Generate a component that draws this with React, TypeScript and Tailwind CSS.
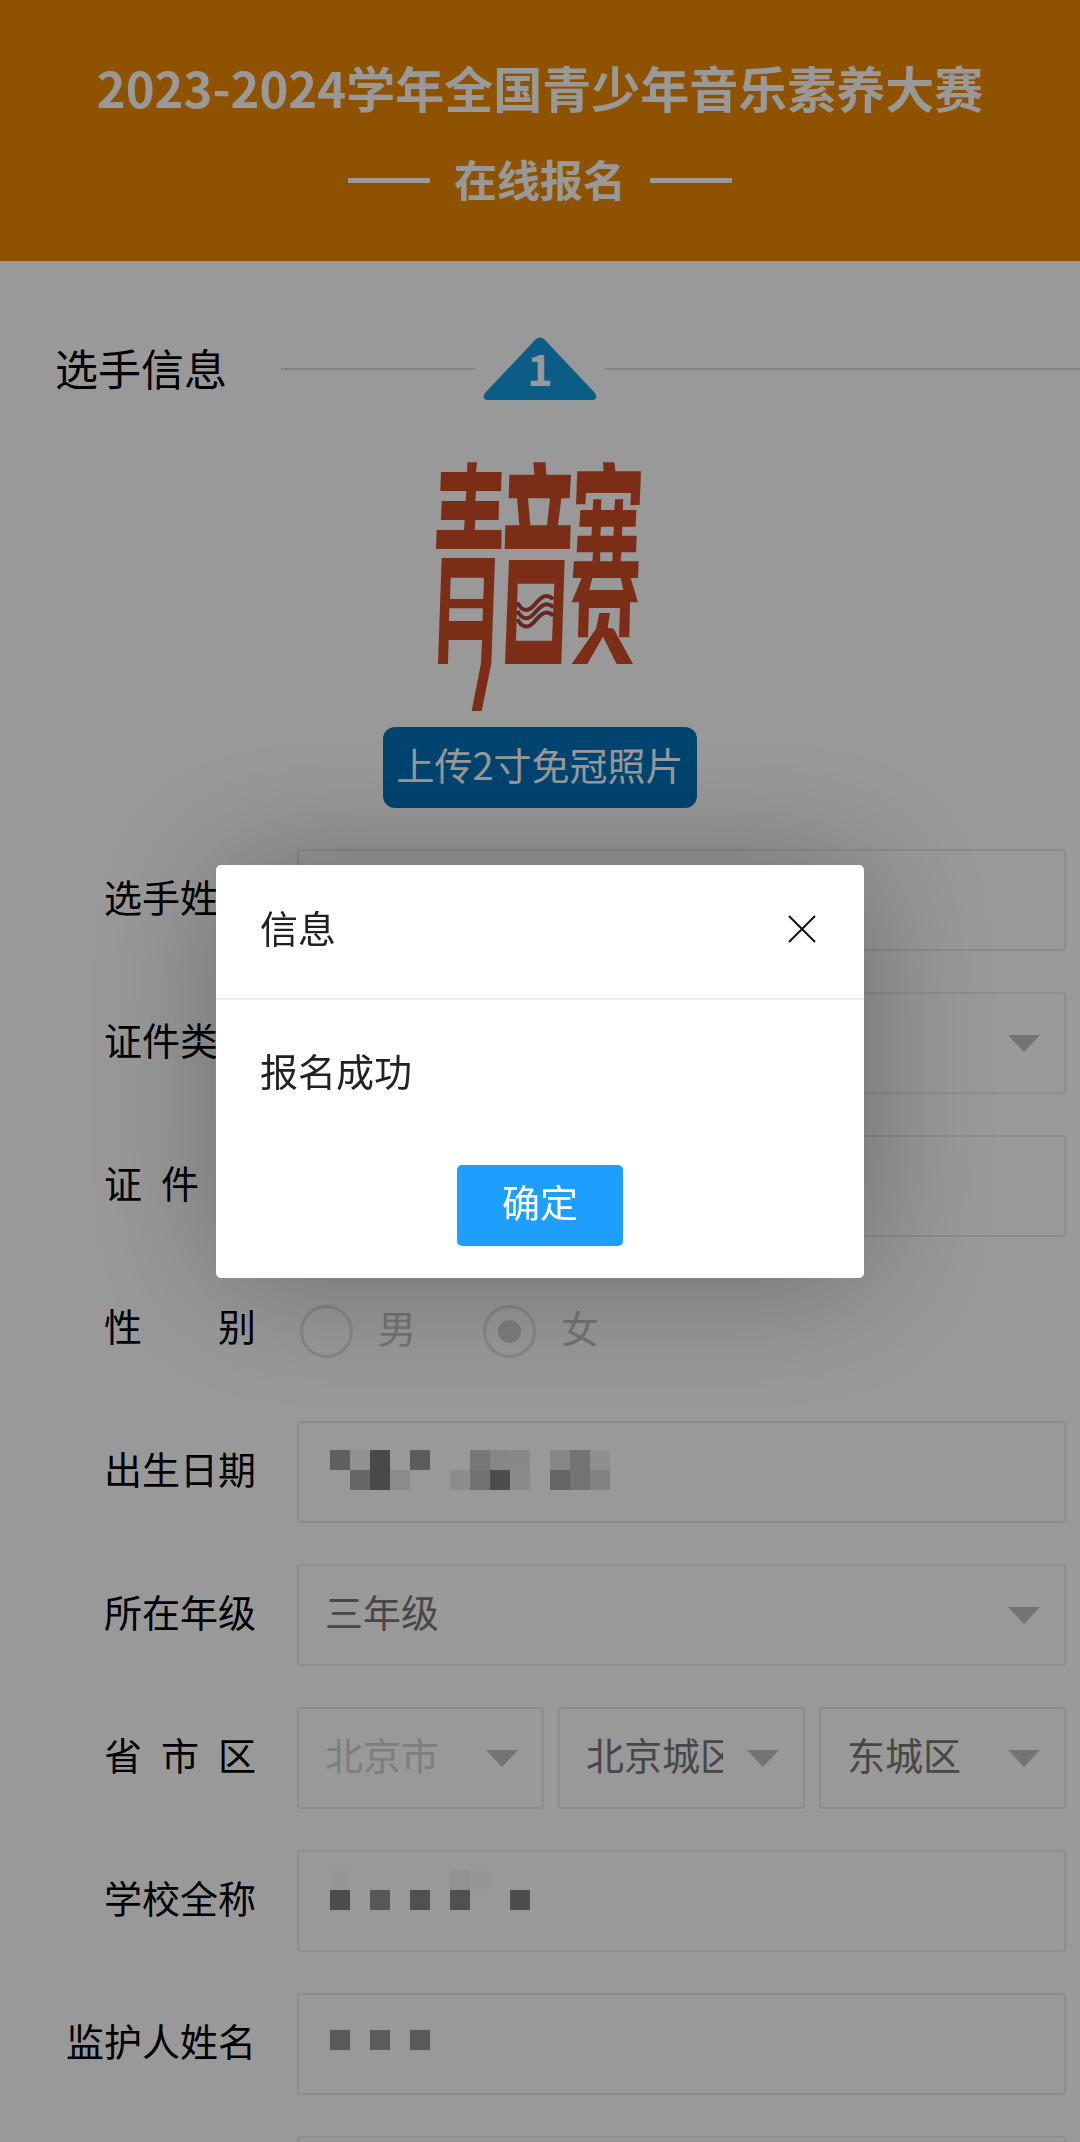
import { useState } from 'react';
import type { ReactNode } from 'react';
import clsx from 'clsx';

// [列, 行, 灰度]，每格 20px
type Cell = [number, number, string];

const birthCells: Cell[] = [
  [0, 0, '#a0a0a0'], [1, 0, '#f0f0f0'], [2, 0, '#7b7b7b'], [3, 0, '#ffffff'], [4, 0, '#999999'],
  [1, 1, '#aaaaaa'], [2, 1, '#7b7b7b'], [3, 1, '#e8e8e8'],
  [6, 1, '#e9e9e9'], [7, 0, '#c6c6c6'], [7, 1, '#bebebe'], [8, 0, '#dfdfdf'], [8, 1, '#808080'],
  [9, 0, '#e3e3e3'], [9, 1, '#e6e6e6'],
  [11, 0, '#dfdfdf'], [11, 1, '#a8a8a8'], [12, 0, '#c0c0c0'], [12, 1, '#c2c2c2'],
  [13, 0, '#eeeeee'], [13, 1, '#d9d9d9'],
];

const schoolCells: Cell[] = [
  [0, 0, '#fafafa'], [6, 0, '#f4f4f4'], [7, 0, '#fafafa'],
  [0, 1, '#808080'], [2, 1, '#919191'], [4, 1, '#858585'], [6, 1, '#858585'], [9, 1, '#808080'],
];

const guardianCells: Cell[] = [
  [0, 0, '#959595'], [2, 0, '#999999'], [4, 0, '#959595'],
];

const boxStyle = 'block h-[102px] w-full appearance-none rounded-[4px] border-2 border-[#ebebeb] bg-transparent px-[26px] outline-none';

function Mosaic({ cells, className }: { cells: Cell[]; className: string }) {
  return (
    <svg className={clsx('pointer-events-none absolute', className)} width="280" height="40" shapeRendering="crispEdges" aria-hidden="true">
      {cells.map(([col, row, fill]) => (
        <rect key={`${col}-${row}`} x={col * 20} y={row * 20} width="20" height="20" fill={fill} />
      ))}
    </svg>
  );
}

interface RowProps {
  label: string;
  htmlFor?: string;
  children: ReactNode;
}

function Row({ label, htmlFor, children }: RowProps) {
  return (
    <div className="grid min-h-[102px] grid-cols-[256px_1fr] items-center gap-[41px]">
      <label htmlFor={htmlFor} className="flex justify-end pb-2 text-black">
        {label.length < 4 ? (
          <span className="flex w-[152px] justify-between">
            {label.split('').map((char) => <span key={char}>{char}</span>)}
          </span>
        ) : label}
      </label>
      {children}
    </div>
  );
}

interface PickerProps {
  id: string;
  value: string;
  label?: string;
  disabled?: boolean;
}

function Picker({ id, value, label, disabled }: PickerProps) {
  return (
    <div className="relative">
      <select
        id={id}
        aria-label={label}
        disabled={disabled}
        className={clsx(boxStyle, 'overflow-hidden pr-[80px] pb-2 opacity-100', disabled ? 'text-[#d2d2d2]' : 'text-[#777777]')}
      >
        <option>{value}</option>
      </select>
      <svg className="pointer-events-none absolute top-[43px] right-[26px]" width="32" height="17" viewBox="0 0 32 17" aria-hidden="true">
        <path d="M0 0h32L16 17z" fill="#c2c2c2" />
      </svg>
    </div>
  );
}

function Logo() {
  return (
    <svg width="220" height="260" viewBox="90 81 660 780" fill="#cf4b26" fillRule="evenodd" role="img" aria-label="青音赛">
      <path d="M202 97H231L228 126H305L303 183H228L226 213H297L296 270H226L224 300H305L304 357H108L110 300H192L194 270H123L125 213H197L199 183H121L123 126H201Z" />
      <path d="M125 384H285L274 700 245 843H215L243 700 246 630H146L144 702H114ZM152 443H252L250 507H150ZM148 535H249L248 573H147Z" />
      <path d="M400 97H436L439 134H513L509 205H484L474 286H512L510 357H314L316 286H358L351 205H326L328 134H403ZM384 205H450L441 286H391Z" />
      <path d="M327 390H494L484 702H315ZM353 461H463L456 632H348Z" />
      <path d="M609 97H643L646 124H723L719 225H691L693 189H558L556 223H528L532 124H611Z" />
      <path d="M580 208H604L603 240H643L645 208H670L668 240H709L707 290H667L666 317H710L708 367H664L662 394H716L714 444H692L714 517H690L688 622H657L660 534H567L564 622H534L537 517H515L545 444H518L522 394H577L579 367H530L533 317H574L576 290H538L541 240H578ZM603 290H642L640 317H601ZM601 367H638L637 394H600ZM577 444H662L670 480H568Z" />
      <path d="M598 549H630L623 593 641 596 699 702H650L609 620 562 702H515L588 596Z" />
      <g fill="none" stroke="#a84434" strokeWidth="12">
        <path d="M352 518C370 550 388 542 404 524C424 500 440 488 460 507" />
        <path d="M352 543C370 575 388 567 404 549C424 525 440 513 460 532" />
        <path d="M352 568C370 600 388 592 404 574C424 550 440 538 460 557" />
      </g>
    </svg>
  );
}

function Dialog({ onClose }: { onClose: () => void }) {
  return (
    <div className="fixed inset-0 z-10 flex items-center justify-center bg-black/40">
      <div
        role="dialog"
        aria-modal="true"
        aria-labelledby="dialog-title"
        className="w-3/5 rounded-[5px] bg-white text-[#222222] shadow-[3px_3px_136px_rgba(0,0,0,0.3)]"
      >
        <div className="flex h-[135px] items-center justify-between border-b-2 border-[#eeeeee] pr-12 pb-1 pl-11">
          <h2 id="dialog-title" className="pb-1">信息</h2>
          <button type="button" aria-label="关闭" onClick={onClose}>
            <svg width="28" height="28" viewBox="0 0 28 28" stroke="#111111" strokeWidth="2">
              <path d="M1 1l26 26M27 1L1 27" />
            </svg>
          </button>
        </div>
        <p className="px-11 pt-[42px]">报名成功</p>
        <div className="flex justify-center pt-[67px] pb-8">
          <button type="button" onClick={onClose} className="h-[81px] w-[166px] rounded-[5px] bg-[#1e9fff] pb-2 text-white">
            确定
          </button>
        </div>
      </div>
    </div>
  );
}

export default function App() {
  const [open, setOpen] = useState(true);

  return (
    <div className={clsx('w-full bg-white font-["Noto_Sans_CJK_SC",sans-serif] text-[38px] leading-[56px]', open && 'h-screen overflow-hidden')}>
      <header className="bg-[#ee8b00] pt-[57px] pb-[50px] text-center font-bold text-white">
        <h1 className="text-[49px] leading-[60px] whitespace-nowrap">2023-2024学年全国青少年音乐素养大赛</h1>
        <div className="mt-8 flex items-center justify-center gap-6 text-[43px] leading-[58px]">
          <span className="h-[5px] w-[82px] bg-white" />
          <h2 className="pb-1">在线报名</h2>
          <span className="h-[5px] w-[82px] bg-white" />
        </div>
      </header>

      <main>
        <div className="grid grid-cols-[1fr_auto_1fr] items-center gap-2 pt-[76px]">
          <div className="flex h-16 items-center gap-[54px] pl-[55px]">
            <h3 className="pb-1 text-[43px] leading-[60px] whitespace-nowrap">选手信息</h3>
            <span className="h-[2px] flex-1 bg-[#dddddd]" />
          </div>
          <svg width="114" height="64" viewBox="0 0 114 64" role="img" aria-label="1">
            <path d="M53 2q4-3 8 0l51 54q4 7-4 7H6q-8 0-4-7z" fill="#139be0" />
            <text x="57" y="49" textAnchor="middle" fontSize="43" fontWeight="700" fill="#ffffff">1</text>
          </svg>
          <span className="h-[2px] bg-[#dddddd]" />
        </div>

        <div className="mt-14 flex flex-col items-center gap-[10px]">
          <Logo />
          <button type="button" className="h-[81px] w-[314px] rounded-[12px] bg-[#0072bb] pb-2 whitespace-nowrap text-white">
            上传2寸免冠照片
          </button>
        </div>

        <form className="mt-[41px] flex flex-col gap-[41px] pr-[14px]">
          <Row label="选手姓名" htmlFor="name">
            <input id="name" type="text" className={boxStyle} />
          </Row>
          <Row label="证件类型" htmlFor="idType">
            <Picker id="idType" value="" />
          </Row>
          <Row label="证件号" htmlFor="idNo">
            <input id="idNo" type="text" className={boxStyle} />
          </Row>
          <Row label="性别">
            <div className="flex items-center pt-1 pl-[3px] text-[#c2c2c2]">
              <label className="flex items-center gap-[25px]">
                <input type="radio" name="gender" disabled className="size-[53px] appearance-none rounded-full border-[3px] border-[#e2e2e2]" />
                <span className="pb-2">男</span>
              </label>
              <label className="ml-[67px] flex items-center gap-[25px]">
                <input
                  type="radio"
                  name="gender"
                  disabled
                  defaultChecked
                  className="size-[53px] appearance-none rounded-full border-[3px] border-[#e2e2e2] bg-[radial-gradient(circle,#d2d2d2_11px,transparent_12px)]"
                />
                <span className="pb-2">女</span>
              </label>
            </div>
          </Row>
          <Row label="出生日期" htmlFor="birth">
            <div className="relative">
              <input id="birth" type="text" readOnly className={boxStyle} />
              <Mosaic cells={birthCells} className="top-[29px] left-[33px]" />
            </div>
          </Row>
          <Row label="所在年级" htmlFor="grade">
            <Picker id="grade" value="三年级" />
          </Row>
          <Row label="省市区" htmlFor="province">
            <div className="grid grid-cols-3 gap-[14px]">
              <Picker id="province" value="北京市" disabled />
              <Picker id="city" label="市" value="北京城区" />
              <Picker id="district" label="区" value="东城区" />
            </div>
          </Row>
          <Row label="学校全称" htmlFor="school">
            <div className="relative">
              <input id="school" type="text" className={boxStyle} />
              <Mosaic cells={schoolCells} className="top-[20px] left-[33px]" />
            </div>
          </Row>
          <Row label="监护人姓名" htmlFor="guardian">
            <div className="relative">
              <input id="guardian" type="text" className={boxStyle} />
              <Mosaic cells={guardianCells} className="top-[37px] left-[33px]" />
            </div>
          </Row>
          <Row label="">
            <input type="text" aria-label="联系电话" className={boxStyle} />
          </Row>
        </form>
      </main>

      {open && <Dialog onClose={() => setOpen(false)} />}
    </div>
  );
}
